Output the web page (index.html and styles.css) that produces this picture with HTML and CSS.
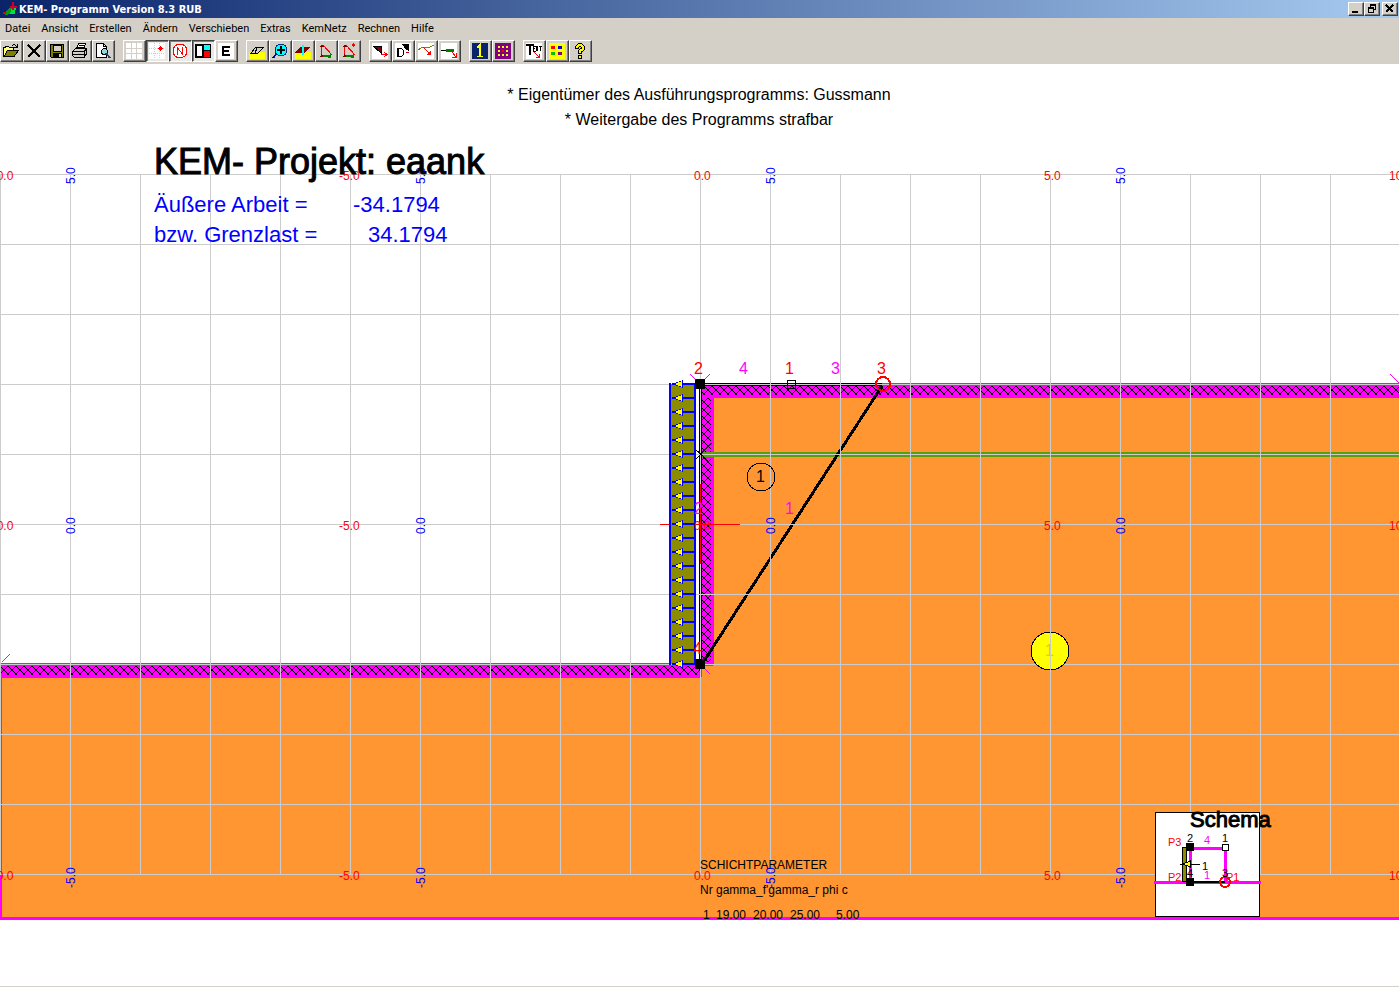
FILE: index.html
```html
<!DOCTYPE html>
<html lang="de">
<head>
    <meta charset="UTF-8">
    <meta name="viewport" content="width=device-width, initial-scale=1.0">
    <title>KEM- Programm Version 8.3 RUB</title>
    <link rel="stylesheet" href="styles.css">
</head>
<body>
    <!-- Title bar -->
    <header class="titlebar">
        <svg class="app-icon" viewBox="0 0 16 16">
            <path d="M2 12L8 6H11L9 13L3 14Z" fill="#00a000"/>
            <path d="M10 6L14 6L13 13H8Z" fill="#00e040"/>
            <path d="M11 1V9M8 6H15" stroke="#d00030" stroke-width="2"/>
            <path d="M1 12H4" stroke="#e00000" stroke-width="2"/>
        </svg>
        <h1>KEM- Programm Version 8.3 RUB</h1>
        <div class="window-buttons">
            <button aria-label="Minimieren"><svg viewBox="0 0 12 10"><path d="M2 8H8" stroke="#000" stroke-width="2"/></svg></button>
            <button aria-label="Wiederherstellen"><svg viewBox="0 0 12 10"><path d="M4 1H10M2 4H8" stroke="#000" stroke-width="2"/><path d="M4.500 3V1M9.500 1V5.500H8M2.500 4V8.500H7.500V4" fill="none" stroke="#000"/></svg></button>
            <button aria-label="Schließen" class="close"><svg viewBox="0 0 12 10"><path d="M2 1L9 8M9 1L2 8" stroke="#000" stroke-width="2"/></svg></button>
        </div>
    </header>

    <!-- Menu -->
    <nav class="menu">
        <button>Datei</button>
        <button>Ansicht</button>
        <button>Erstellen</button>
        <button>Ändern</button>
        <button>Verschieben</button>
        <button>Extras</button>
        <button>KemNetz</button>
        <button>Rechnen</button>
        <button>Hilfe</button>
    </nav>

    <!-- Toolbar -->
    <div class="toolbar">
        <div class="group">
            <button aria-label="Öffnen"><svg viewBox="0 0 16 16"><path d="M.5 13.500V4.500H2L3 3.500H5.500L6.500 4.500H10.500V7.500" fill="#ffff80" stroke="#000"/><path d="M1 13.500L4.500 7.500H15.500L11 13.500Z" fill="#808000" stroke="#000"/><path d="M9 2.500L11 1.500L14 3.500M14.500 1V4.500H11" fill="none" stroke="#000"/></svg></button>
            <button aria-label="Löschen"><svg viewBox="0 0 16 16"><path d="M2 2L14 14M14 2L2 14" stroke="#000" stroke-width="2"/></svg></button>
            <button aria-label="Speichern"><svg viewBox="0 0 16 16"><path d="M1.500 1.500H14.500V14.500H2.500L1.500 13.500Z" fill="#808000" stroke="#000"/><path d="M4 2H12V8H4Z" fill="#d4d0c8" stroke="#000"/><path d="M4 10H13V15H4Z"/><path d="M10 11H12V14H10Z" fill="#d4d0c8"/></svg></button>
            <button aria-label="Drucken"><svg viewBox="0 0 16 16"><path d="M4.500 6L6.500 .5H13.500L11.500 6Z" fill="#fff" stroke="#000"/><path d="M7 2.500H12M6 4.500H11" stroke="#000"/><path d="M.5 8.500L3.500 5.500H14.500V11L12 14.500H2.500L.5 12.500Z" fill="#d4d0c8" stroke="#000"/><path d="M1 8.500H12V14M1 11.500H12M12 8L15 6M13 12.500L15 9" fill="none" stroke="#000"/><path d="M6 10H9" stroke="#d8d800"/></svg></button>
            <button aria-label="Seitenansicht"><svg viewBox="0 0 16 16"><path d="M1.500 .5H8.500L11.500 3.500V14.500H1.500Z" fill="#fff" stroke="#000"/><path d="M8.500 1V3.500H12" fill="none" stroke="#000"/><circle cx="9.500" cy="8.500" r="3" fill="#90d8e0" stroke="#000"/><path d="M11 10L15 15" stroke="#204080" stroke-width="2"/></svg></button>
        </div>
        <div class="group">
            <button aria-label="Raster"><svg viewBox="0 0 16 16"><path d="M0 0H16V16H0Z" fill="#fff"/><path d="M0 5.500H16M0 10.500H16M5.500 0V16M10.500 0V16" stroke="#d4d0c8"/></svg></button>
            <button class="pressed" aria-label="Rasterpunkt"><svg viewBox="0 0 16 16"><path d="M0 0H16V16H0Z" fill="#fff"/><path d="M0 5.500H16M0 10.500H16M5.500 0V16M10.500 0V16" stroke="#d4d0c8" stroke-dasharray="1 1"/><path d="M11.500 3L14 5.500L11.500 8L9 5.500Z" fill="#f00"/></svg></button>
            <button class="pressed" aria-label="Nummern"><svg viewBox="0 0 16 16"><circle cx="8" cy="8" r="7" fill="#fff" stroke="#f00"/><path d="M5.500 12V5L10.500 11V4" fill="none" stroke="#f00"/></svg></button>
            <button class="pressed" aria-label="Farben"><svg viewBox="0 0 16 16"><path d="M0 1H16V15H0Z"/><path d="M2 3H7V13H2Z" fill="#fff"/><path d="M9 2H15V7H9Z" fill="#0ff"/><path d="M9 8H15V14H9Z" fill="#f00"/></svg></button>
            <button aria-label="Elemente"><svg viewBox="0 0 16 16"><path d="M0 0H16V16H0Z" fill="#fff"/><path d="M4 3H12V5H6V7H11V9H6V11H12V13H4Z"/></svg></button>
        </div>
        <div class="group">
            <button aria-label="Schicht"><svg viewBox="0 0 16 16"><path d="M0 9H16V16H0Z" fill="#ff0"/><path d="M1.500 10.500L6.500 4.500H14.500L8.500 10.500Z" fill="#d4d0c8" stroke="#000"/><path d="M1 10H9M6 10L8 5" stroke="#000"/></svg></button>
            <button aria-label="Vergrößern"><svg viewBox="0 0 16 16"><path d="M5 10L1 15" stroke="#0000c0" stroke-width="2"/><circle cx="9" cy="7" r="6" fill="#0ff" stroke="#003080"/><path d="M5 7H13M9 3V11" stroke="#000" stroke-width="2"/></svg></button>
            <button aria-label="Schnitt"><svg viewBox="0 0 16 16"><path d="M0 9H16V16H0Z" fill="#ff0"/><path d="M0 10L5 4H9V10Z" fill="#800000"/><path d="M9 10V4H15L10 10Z" fill="#800000"/><path d="M8 2V12" stroke="#0ff" stroke-width="2"/></svg></button>
            <button aria-label="Dreieck"><svg viewBox="0 0 16 16"><path d="M5 2L14 12M3.500 4V12" stroke="#f00"/><path d="M3 13H13" stroke="#008000" stroke-width="2"/><path d="M4 1L6 4H2ZM2 14L4 10L5 14Z" fill="#800000"/><path d="M13 10V15H10Z" fill="#008000"/></svg></button>
            <button aria-label="Dreieckspunkt"><svg viewBox="0 0 16 16"><path d="M5 2L14 12M3.500 4V12" stroke="#f00"/><path d="M3 13H13" stroke="#008000" stroke-width="2"/><path d="M4 1L6 4H2ZM2 14L4 10L5 14Z" fill="#800000"/><path d="M13 10V15H10Z" fill="#008000"/><path d="M12 0L14 2L12 4L10 2Z" fill="#f00"/></svg></button>
        </div>
        <div class="group">
            <button aria-label="Element verschieben"><svg viewBox="0 0 16 16"><path d="M0 0H16V16H0Z" fill="#fff"/><path d="M1 3H9V10Z" fill="#800000" stroke="#000"/><path d="M9 11.500H15M12 9L15 11.500L12 14" fill="none" stroke="#f00"/></svg></button>
            <button aria-label="Drehen"><svg viewBox="0 0 16 16"><path d="M0 0H16V16H0Z" fill="#fff"/><path d="M2.500 5.500H6.500L8.500 7.500V11.500L6.500 13.500H2.500Z" fill="none" stroke="#000"/><path d="M3 6V13" stroke="#000" stroke-width="2"/><path d="M7 1H14V8L11 7Z"/><path d="M11 9H14" stroke="#c00"/></svg></button>
            <button aria-label="Linie verschieben"><svg viewBox="0 0 16 16"><path d="M0 0H16V16H0Z" fill="#fff"/><path d="M0 7L5 4H12L16 2" fill="none" stroke="#808000"/><path d="M5 4L12 11" stroke="#f00"/><path d="M13 7V12H8Z" fill="#f00"/></svg></button>
            <button aria-label="Anker verschieben"><svg viewBox="0 0 16 16"><path d="M0 0H16V16H0Z" fill="#fff"/><path d="M0 7.500H5" stroke="#000"/><path d="M5 6H13V9H5Z" fill="#008000"/><path d="M11 9L15 14M15 10V14H11" fill="none" stroke="#f00"/></svg></button>
        </div>
        <div class="group">
            <button aria-label="Einzelrechnung"><svg viewBox="0 0 16 16"><path d="M0 0H16V16H0Z" fill="#0a246a"/><path d="M5 5L8 2V14" fill="none" stroke="#ff0" stroke-width="2"/><path d="M5 13.500H11" stroke="#ff0"/></svg></button>
            <button aria-label="Rasterrechnung"><svg viewBox="0 0 16 16"><path d="M0 0H16V16H0Z" fill="#800080"/><path d="M3 4H13M3 8H13M3 12H13" stroke="#ff0" stroke-width="2" stroke-dasharray="2 2"/><path d="M7 7H9V9H7Z" fill="#f00"/></svg></button>
        </div>
        <div class="group">
            <button aria-label="Text"><svg viewBox="0 0 16 16"><path d="M0 0H16V16H0Z" fill="#fff"/><path d="M0 2H8M4 2V12" stroke="#000" stroke-width="2"/><path d="M9.500 3H7.500V8H9.500M7 5.500H9M10 3L12 8M12 3L10 8M12.500 3.500H16M14.500 3V8" fill="none" stroke="#000"/><path d="M8 9L13 14M13 11V14H10" fill="none" stroke="#f00"/></svg></button>
            <button aria-label="Legende"><svg viewBox="0 0 16 16"><path d="M0 0H16V16H0Z" fill="#ff0"/><path d="M2 3H6V6H2Z" fill="#f00"/><path d="M9 3H13V6H9Z" fill="#00c"/><path d="M2 9H6V12H2Z" fill="#00c000"/><path d="M9 9H13V12H9Z" fill="#800080"/></svg></button>
            <button aria-label="Hilfe"><svg viewBox="0 0 16 16"><path d="M5 6V4L7 2H9L11 4V6L8 8V11" fill="none" stroke="#000" stroke-width="4"/><path d="M6 12H10V16H6Z"/><path d="M5 5V4L7 2H9L11 4V6L8 8V10" fill="none" stroke="#ff0" stroke-width="2"/><path d="M7 13H9V15H7Z" fill="#ff0"/></svg></button>
        </div>
    </div>

    <!-- Drawing, 70 units = 1 grid cell -->
    <main>
        <svg class="drawing" viewBox="0 64 1399 922">
            <defs>
                <pattern id="hatch-top" x="0" y="386" width="8" height="8" patternUnits="userSpaceOnUse">
                    <path d="M0 0L8 8M8 0L0 8" stroke="#000"/>
                </pattern>
                <pattern id="hatch-bottom" x="0" y="666" width="8" height="8" patternUnits="userSpaceOnUse">
                    <path d="M0 0L8 8M8 0L0 8" stroke="#000"/>
                </pattern>
                <g id="arrow">
                    <path d="M672 0H695" stroke="#00f" stroke-width="2"/>
                    <path d="M671 0L683 -4V4Z" fill="#00f"/>
                    <path d="M675 0L682 -3V3Z" fill="#ff0"/>
                </g>
            </defs>

            <!-- Soil -->
            <path class="soil" d="M700 384H1399V918H0V664H700Z"/>
            <path class="border" d="M0 917H1399V920H0ZM0 664H2V920H0Z"/>
            <path class="border" d="M700 383H1399V398H714V664H702V385H700ZM0 663H700V678H0Z"/>
            <path d="M702 386H1399V395H702ZM702 398H711V662H702Z" fill="url(#hatch-top)"/>
            <path d="M0 666H700V675H0Z" fill="url(#hatch-bottom)"/>
            <path class="thin" d="M2 662L10 654M1390 374L1399 383M690 374L700 384L710 374M700 664L710 674M701 664V677M701 665H713"/>
            <path d="M700 452H1399V457H700Z" fill="#5a9e0a"/>

            <!-- Edges of the element -->
            <path d="M696 384H702V664H696Z" fill="#fff"/>
            <path d="M699 384H702V664H699Z"/>
            <path d="M700 383H882V386H700Z"/>
            <path class="slip" d="M882 386L702 664"/>

            <!-- Grid -->
            <g class="grid" id="grid"></g>

            <path d="M701 454L712 443M701 454L712 466M696 450L701 454L696 459" fill="none" stroke="#000"/>
            <path d="M660 524H740V525H660ZM700 484H701V564H700Z" fill="#f00"/>

            <!-- Wall and load -->
            <path d="M670 384H695V664H670Z" fill="#8c8c00"/>
            <path d="M670 383V665M695 383V665" stroke="#00f" stroke-width="2"/>
            <g id="arrows"></g>

            <!-- Nodes -->
            <path d="M695 379H705V389H695ZM695 659H705V669H695Z"/>
            <rect x="787.500" y="380.500" width="8" height="8" fill="none" stroke="#000"/>
            <circle cx="883" cy="384" r="7" fill="none" stroke="#f00" stroke-width="2"/>
            <circle cx="761" cy="477" r="14" fill="none" stroke="#000"/>
            <circle cx="1050" cy="651" r="19" fill="#ff0" stroke="#000"/>
            <g class="node">
                <text x="694" y="374" class="red">2</text>
                <text x="739" y="374" class="magenta">4</text>
                <text x="785" y="374" class="red">1</text>
                <text x="831" y="374" class="magenta">3</text>
                <text x="877" y="374" class="red">3</text>
                <text x="785" y="514" class="magenta">1</text>
                <text x="694" y="514" class="magenta">2</text>
                <text x="693" y="654" class="red">4</text>
                <text x="756" y="482">1</text>
                <text x="1045" y="656" class="layer">1</text>
            </g>
            <path class="grid" d="M1050.500 631V671"/>

            <!-- Axis labels -->
            <g id="labels" class="axis"></g>

            <!-- Texts -->
            <g class="note" text-anchor="middle">
                <text x="699" y="100">* Eigentümer des Ausführungsprogramms: Gussmann</text>
                <text x="699" y="125">* Weitergabe des Programms strafbar</text>
            </g>
            <text x="154" y="174" class="project">KEM- Projekt: eaank</text>
            <g class="result">
                <text x="154" y="212">Äußere Arbeit =</text>
                <text x="353" y="212">-34.1794</text>
                <text x="154" y="242">bzw. Grenzlast =</text>
                <text x="368" y="242">34.1794</text>
            </g>
            <g class="params">
                <text x="700" y="869">SCHICHTPARAMETER</text>
                <text x="700" y="894">Nr gamma_f'gamma_r phi c</text>
                <text x="703" y="919">1</text>
                <text x="716" y="919">19.00</text>
                <text x="753" y="919">20.00</text>
                <text x="790" y="919">25.00</text>
                <text x="836" y="919">5.00</text>
            </g>

            <!-- Schema -->
            <rect x="1155.500" y="812.500" width="104" height="104" fill="#fff" stroke="#000"/>
            <path class="border" d="M1154 881H1261V884H1154Z"/>
            <path d="M1190 848H1225V882" class="schema-line"/>
            <path d="M1190 848V882" class="schema-line"/>
            <path d="M1182.500 847.500H1186.500V881.500H1182.500Z" fill="#8c8c00" stroke="#000"/>
            <path d="M1190 881H1225V883H1190Z"/>
            <path d="M1180 864H1200V865H1180Z"/>
            <path d="M1183 864L1190 861V867Z" fill="#ff0" stroke="#000" stroke-width="1"/>
            <path d="M1186 843H1194V851H1186ZM1186 878H1194V886H1186Z"/>
            <rect x="1222.500" y="844.500" width="6" height="6" fill="#fff" stroke="#000"/>
            <circle cx="1225" cy="882" r="5" fill="none" stroke="#f00" stroke-width="2"/>
            <text x="1190" y="827" class="schema-title">Schema</text>
            <g class="schema-text">
                <text x="1168" y="846" class="red">P3</text>
                <text x="1168" y="881" class="red">P2</text>
                <text x="1226" y="881" class="red">P1</text>
                <text x="1187" y="842">2</text>
                <text x="1222" y="842">1</text>
                <text x="1204" y="844" class="magenta">4</text>
                <text x="1204" y="879" class="magenta">1</text>
                <text x="1202" y="870">1</text>
                <text x="1187" y="877">4</text>
                <text x="1222" y="877">3</text>
            </g>
        </svg>
    </main>

    <script src="drawing.js"></script>
</body>
</html>
```
FILE: styles.css
```css
/* Window */
body {
    margin: 0;
    background: #fff;
    font-family: Roboto, "Noto Sans", sans-serif;
    font-size: 11px;
    border-bottom: 1px solid #d4d0c8;
}

button {
    margin: 0;
    padding: 0;
    border: none;
    background: #d4d0c8;
    color: #000;
    font: inherit;
}

svg {
    display: block;
    shape-rendering: crispEdges;
}

/* Title bar */
.titlebar {
    display: flex;
    align-items: center;
    height: 18px;
    padding: 0 1px 0 2px;
    background: linear-gradient(to right, #0a246a, #a6caf0);
}

.app-icon {
    width: 16px;
    height: 16px;
}

.titlebar h1 {
    flex: 1;
    margin: 0 0 0 1px;
    color: #fff;
    font-family: "DejaVu Sans Condensed", "DejaVu Sans", sans-serif;
    font-size: 11px;
    font-weight: bold;
    white-space: nowrap;
}

.window-buttons {
    display: flex;
}

.window-buttons button {
    width: 16px;
    height: 14px;
    border: 1px solid;
    border-color: #fff #404040 #404040 #fff;
    box-shadow: inset -1px -1px #808080;
}

.window-buttons svg {
    width: 12px;
    height: 10px;
    margin: 1px;
}

.window-buttons .close {
    margin-left: 2px;
}

/* Menu */
.menu {
    display: flex;
    gap: 11px;
    height: 20px;
    padding-left: 5px;
    background: #d4d0c8;
}

/* Toolbar */
.toolbar {
    display: flex;
    gap: 8px;
    padding: 2px 0;
    background: #d4d0c8;
}

.group {
    display: flex;
}

.toolbar button {
    width: 23px;
    height: 22px;
    padding: 2px;
    border: 1px solid;
    border-color: #fff #404040 #404040 #fff;
    box-shadow: inset -1px -1px #808080;
}

.toolbar .pressed {
    border-color: #404040 #fff #fff #404040;
    background: #eae8e4;
    box-shadow: inset 1px 1px #808080;
}

.toolbar svg {
    width: 16px;
    height: 16px;
}

/* Drawing */
.drawing {
    width: 100%;
    height: auto;
    font-family: "Liberation Sans", Arial, sans-serif;
}

.soil {
    fill: #ff9632;
}

.border {
    fill: #f0f;
}

.thin {
    fill: none;
    stroke: #f0f;
}

.slip {
    stroke: #000;
    stroke-width: 3;
}

.grid {
    stroke: #ccc;
}

text.red {
    fill: #f00;
}

text.magenta {
    fill: #f0f;
}

.node {
    font-size: 16px;
}

.layer {
    fill: #f0c800;
}

.axis {
    font-size: 12px;
}

.axis .x-label {
    fill: #f00;
}

.axis .y-label {
    fill: #00f;
}

.note {
    font-size: 16px;
}

.project {
    font-size: 36px;
    stroke: #000;
    stroke-width: 1px;
}

.result {
    font-size: 22px;
    fill: #00f;
}

.params {
    font-size: 12px;
}

/* Schema */
.schema-line {
    fill: none;
    stroke: #f0f;
    stroke-width: 3;
}

.schema-title {
    font-size: 22px;
    stroke: #000;
    stroke-width: 1px;
}

.schema-text {
    font-size: 11px;
}
```
FILE: drawing.js
```js
const NS = "http://www.w3.org/2000/svg";

function add(parent, name, attrs, text) {
    const el = document.createElementNS(NS, name);
    for (const key in attrs) {
        el.setAttribute(key, attrs[key]);
    }
    if (text) {
        el.textContent = text;
    }
    document.getElementById(parent).appendChild(el);
}

// Grid lines
for (let x = 0; x < 1399; x += 70) {
    add("grid", "path", { d: `M${x + 0.5} 174V875` });
}
for (let y = 174; y <= 874; y += 70) {
    add("grid", "path", { d: `M0 ${y + 0.5}H1399` });
}

// Load arrows on the wall
for (let y = 384; y <= 664; y += 14) {
    add("arrows", "use", { href: "#arrow", y: y });
}

// Axis labels
const columns = [[-14, "-10.0"], [339, "-5.0"], [694, "0.0"], [1044, "5.0"], [1389, "10.0"]];
const rows = [[180, "5.0"], [530, "0.0"], [880, "-5.0"]];
rows.forEach(([y, value]) => {
    columns.forEach(([x, label]) => {
        add("labels", "text", { x: x, y: y, class: "x-label" }, label);
    });
    [75, 425, 775, 1125].forEach((x) => {
        const start = value === "-5.0" ? y + 8 : y + 4;
        add("labels", "text", { transform: `translate(${x} ${start}) rotate(-90)`, class: "y-label" }, value);
    });
});
```
